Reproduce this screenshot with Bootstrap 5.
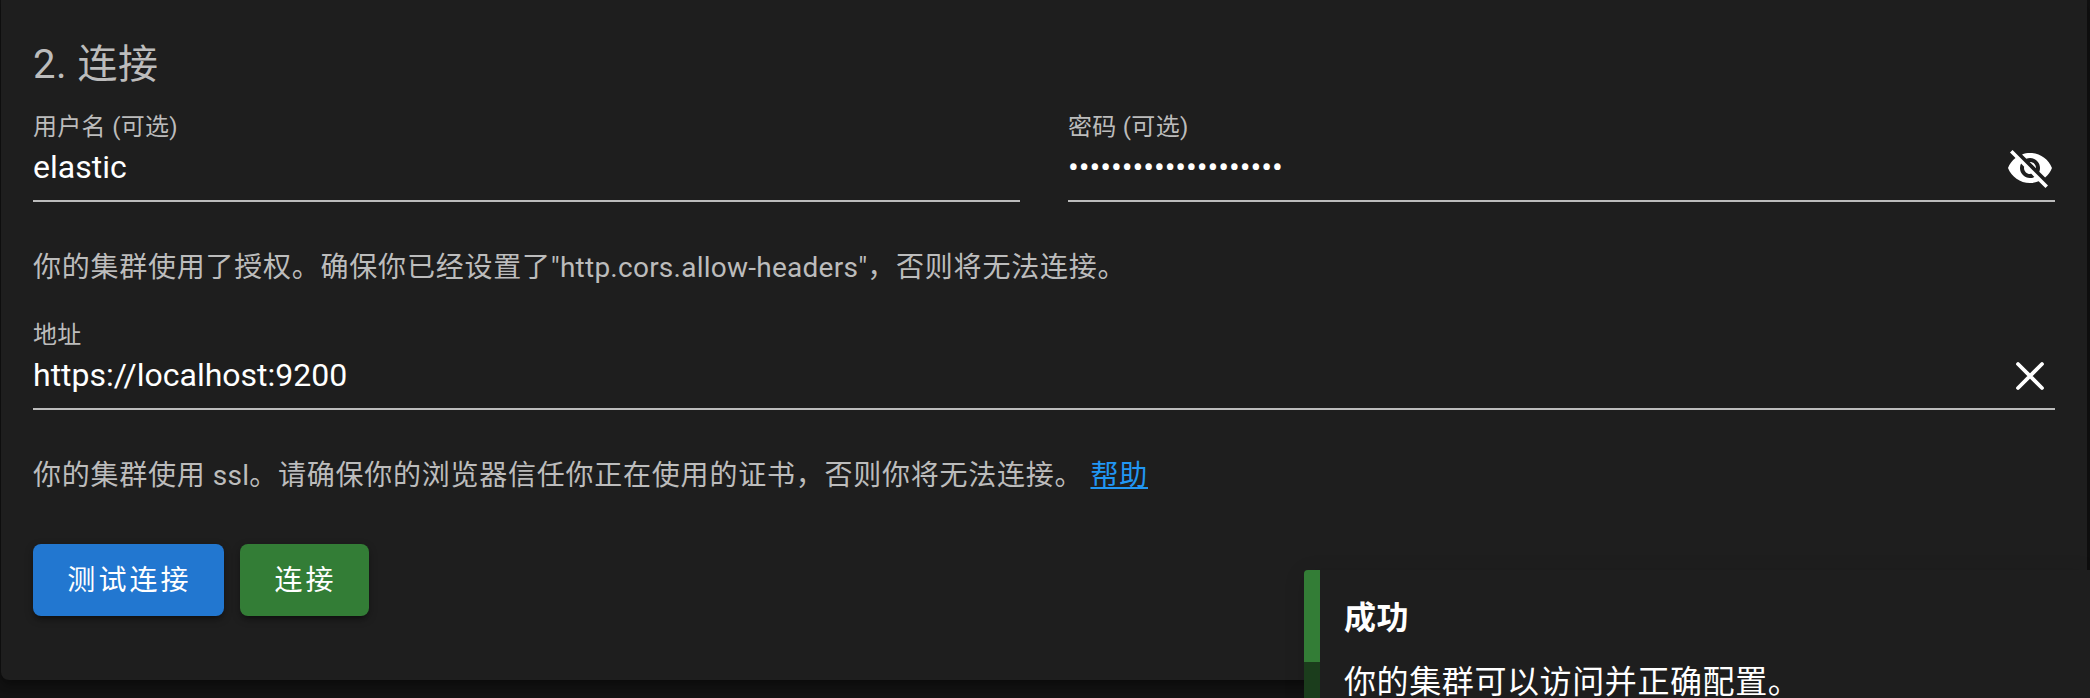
<!DOCTYPE html>
<html lang="zh-CN">
<head>
<meta charset="utf-8">
<title>连接</title>
<link rel="stylesheet" href="https://cdn.jsdelivr.net/npm/bootstrap@5.3.0/dist/css/bootstrap.min.css">
<style>
  body { background: #121212; font-family: Roboto, "Noto Sans CJK SC", sans-serif; color: #fff; overflow: hidden; height: 698px; }
  .connect-card { --bs-card-bg: #1e1e1e; --bs-card-border-width: 0; --bs-card-color: #fff; height: 680px; margin: 0 3px 0 1px; padding: 0 32px; border-radius: 0 0 8px 8px; box-shadow: 0 6px 8px rgba(0,0,0,.25), 0 2px 12px rgba(0,0,0,.2); }
  .soft { color: #bcbcbc; }
  .step-title { font-size: 40px; line-height: 64px; letter-spacing: .5px; margin: 0; padding-top: 33px; font-weight: 400; height: 108px; }
  .field { height: 94px; border-bottom: 2px solid #bcbcbc; }
  .field-label { font-size: 24px; line-height: 38px; height: 36px; letter-spacing: .3px; }
  .field-value { font-size: 32px; line-height: 46px; height: 46px; }
  .dots { letter-spacing: -.06px; }
  .field-pair { column-gap: 48px; }
  .note { font-size: 28px; line-height: 44px; letter-spacing: .76px; margin: 0; padding-top: 44px; white-space: nowrap; }
  .note span { letter-spacing: .25px; }
  .note a { color: #2196f3; text-decoration-thickness: 2px; text-underline-offset: 2px; }
  .btn-action { height: 72px; border: 0; border-radius: 8px; color: #fff; font-size: 28px; letter-spacing: 3.1px; padding: 2px 0 0 2px; box-shadow: 0 6px 4px -4px rgba(0,0,0,.3), 0 3px 8px rgba(0,0,0,.3); }
  .btn-test { background: #2277d0; width: 191px; }
  .btn-go { background: #337d36; width: 129px; }
  .snack { left: 1304px; top: 570px; width: 786px; height: 160px; background: #1e1e1e; border-radius: 4px 0 0 0; overflow: hidden; }
  .snack-shade { left: 1304px; top: 570px; width: 786px; height: 160px; box-shadow: 0 4px 20px rgba(0,0,0,.12); }
  .snack-bar { width: 16px; background: #1b3d1c; }
  .snack-bar div { height: 92px; background: #337d36; }
  .snack-text { padding: 24px 0 0 24px; font-size: 32px; line-height: 48px; letter-spacing: .6px; white-space: nowrap; }
</style>
<script src="https://cdn.jsdelivr.net/npm/bootstrap@5.3.0/dist/js/bootstrap.bundle.min.js"></script>
</head>
<body>
<main class="card connect-card">
  <h2 class="step-title soft">2. 连接</h2>
  <div class="d-flex field-pair">
    <div class="field flex-fill w-50">
      <div class="field-label soft">用户名 (可选)</div>
      <div class="field-value">elastic</div>
    </div>
    <div class="field flex-fill w-50">
      <div class="field-label soft">密码 (可选)</div>
      <div class="field-value d-flex justify-content-between">
        <span class="dots">••••••••••••••••••••</span>
        <svg width="48" height="48" viewBox="0 0 24 24" fill="#fff" style="margin-right:1px"><path d="M12 7c2.76 0 5 2.24 5 5 0 .65-.13 1.26-.36 1.83l2.92 2.92c1.51-1.26 2.7-2.89 3.43-4.75-1.73-4.39-6-7.5-11-7.5-1.4 0-2.74.25-3.98.7l2.16 2.16C10.74 7.13 11.35 7 12 7zM2 4.27l2.28 2.28.46.46C3.08 8.3 1.78 10.02 1 12c1.73 4.39 6 7.5 11 7.5 1.55 0 3.03-.3 4.38-.84l.42.42L19.73 22 21 20.73 3.27 3 2 4.27zM7.53 9.8l1.55 1.55c-.05.21-.08.43-.08.65 0 1.66 1.34 3 3 3 .22 0 .44-.03.65-.08l1.55 1.55c-.67.33-1.41.53-2.2.53-2.76 0-5-2.24-5-5 0-.79.2-1.53.53-2.2zm4.31-.78l3.15 3.15.02-.16c0-1.66-1.34-3-3-3l-.17.01z"/></svg>
      </div>
    </div>
  </div>
  <p class="note soft" style="height:114px">你的集群使用了授权。确保你已经设置了<span>"http.cors.allow-headers"</span>，否则将无法连接。</p>
  <div class="field">
    <div class="field-label soft">地址</div>
    <div class="field-value d-flex justify-content-between">
      <span>https://localhost:9200</span>
      <svg width="48" height="48" viewBox="0 0 24 24" fill="none" stroke="#fff" stroke-width="1.9" stroke-linecap="round" style="margin-right:1px"><path d="M6 6 18 18M18 6 6 18"/></svg>
    </div>
  </div>
  <p class="note soft" style="height:134px">你的集群使用<span> ssl</span>。请确保你的浏览器信任你正在使用的证书，否则你将无法连接。<span> </span><a href="#">帮助</a></p>
  <div class="d-flex gap-3">
    <button class="btn btn-action btn-test" type="button">测试连接</button>
    <button class="btn btn-action btn-go" type="button">连接</button>
  </div>
</main>
<div class="snack-shade position-absolute"></div>
<div class="snack position-absolute d-flex" role="status">
  <div class="snack-bar"><div></div></div>
  <div class="snack-text">
    <div class="fw-bold">成功</div>
    <div style="padding-top:16px">你的集群可以访问并正确配置。</div>
  </div>
</div>
</body>
</html>
